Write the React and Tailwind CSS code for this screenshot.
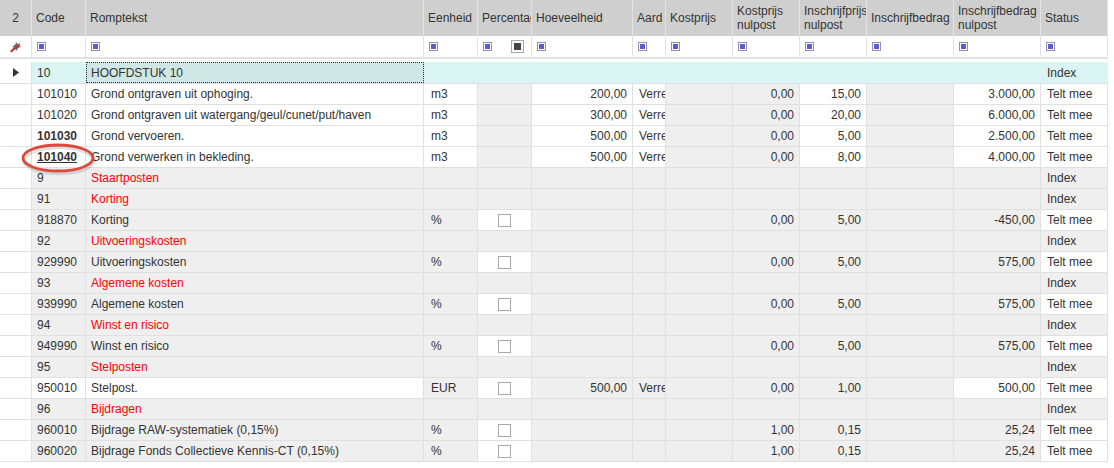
import React from 'react';

// column widths of the grid, left to right
const COLS = [
  { k: 'rh', w: 'w-[32px]' },
  { k: 'code', w: 'w-[54px]' },
  { k: 'text', w: 'w-[338px]' },
  { k: 'unit', w: 'w-[54px]' },
  { k: 'pct', w: 'w-[54px]' },
  { k: 'qty', w: 'w-[101px]' },
  { k: 'aard', w: 'w-[33px]' },
  { k: 'kp', w: 'w-[67px]' },
  { k: 'kpn', w: 'w-[67px]' },
  { k: 'ipn', w: 'w-[67px]' },
  { k: 'ib', w: 'w-[87px]' },
  { k: 'ibn', w: 'w-[87px]' },
  { k: 'status', w: 'w-[67px]' },
];

const HEADERS = {
  rh: '2',
  code: 'Code',
  text: 'Romptekst',
  unit: 'Eenheid',
  pct: 'Percentage',
  qty: 'Hoeveelheid',
  aard: 'Aard',
  kp: 'Kostprijs',
  kpn: ['Kostprijs', 'nulpost'],
  ipn: ['Inschrijfprijs', 'nulpost'],
  ib: 'Inschrijfbedrag',
  ibn: ['Inschrijfbedrag', 'nulpost'],
  status: 'Status',
};

const RIGHT = ['qty', 'kp', 'kpn', 'ipn', 'ib', 'ibn'];

// which cells are white, per row type (the rest is gray)
const WHITE = {
  item: ['rh', 'code', 'text', 'unit', 'qty', 'aard', 'ipn', 'ibn', 'status'],
  section: ['rh'],
  staart: ['rh', 'pct', 'status'],
  stelpost: ['rh', 'code', 'text', 'pct', 'ibn', 'status'],
};

const rows = [
  { type: 'item', code: '101010', text: 'Grond ontgraven uit ophoging.', unit: 'm3', qty: '200,00', aard: 'Verrekenbaar', kpn: '0,00', ipn: '15,00', ibn: '3.000,00', status: 'Telt mee' },
  { type: 'item', code: '101020', text: 'Grond ontgraven uit watergang/geul/cunet/put/haven', unit: 'm3', qty: '300,00', aard: 'Verrekenbaar', kpn: '0,00', ipn: '20,00', ibn: '6.000,00', status: 'Telt mee' },
  { type: 'item', code: '101030', bold: true, text: 'Grond vervoeren.', unit: 'm3', qty: '500,00', aard: 'Verrekenbaar', kpn: '0,00', ipn: '5,00', ibn: '2.500,00', status: 'Telt mee' },
  { type: 'item', code: '101040', bold: true, underline: true, text: 'Grond verwerken in bekleding.', unit: 'm3', qty: '500,00', aard: 'Verrekenbaar', kpn: '0,00', ipn: '8,00', ibn: '4.000,00', status: 'Telt mee' },
  { type: 'section', code: '9', text: 'Staartposten', status: 'Index' },
  { type: 'section', code: '91', text: 'Korting', status: 'Index' },
  { type: 'staart', code: '918870', text: 'Korting', unit: '%', check: true, kpn: '0,00', ipn: '5,00', ibn: '-450,00', status: 'Telt mee' },
  { type: 'section', code: '92', text: 'Uitvoeringskosten', status: 'Index' },
  { type: 'staart', code: '929990', text: 'Uitvoeringskosten', unit: '%', check: true, kpn: '0,00', ipn: '5,00', ibn: '575,00', status: 'Telt mee' },
  { type: 'section', code: '93', text: 'Algemene kosten', status: 'Index' },
  { type: 'staart', code: '939990', text: 'Algemene kosten', unit: '%', check: true, kpn: '0,00', ipn: '5,00', ibn: '575,00', status: 'Telt mee' },
  { type: 'section', code: '94', text: 'Winst en risico', status: 'Index' },
  { type: 'staart', code: '949990', text: 'Winst en risico', unit: '%', check: true, kpn: '0,00', ipn: '5,00', ibn: '575,00', status: 'Telt mee' },
  { type: 'section', code: '95', text: 'Stelposten', status: 'Index' },
  { type: 'stelpost', code: '950010', text: 'Stelpost.', unit: 'EUR', check: true, qty: '500,00', aard: 'Verrekenbaar', kpn: '0,00', ipn: '1,00', ibn: '500,00', status: 'Telt mee' },
  { type: 'section', code: '96', text: 'Bijdragen', status: 'Index' },
  { type: 'staart', code: '960010', text: 'Bijdrage RAW-systematiek (0,15%)', unit: '%', check: true, kpn: '1,00', ipn: '0,15', ibn: '25,24', status: 'Telt mee' },
  { type: 'staart', code: '960020', text: 'Bijdrage Fonds Collectieve Kennis-CT (0,15%)', unit: '%', check: true, kpn: '1,00', ipn: '0,15', ibn: '25,24', status: 'Telt mee' },
];

const FilterIcon = () => (
  <span className="inline-block w-[9px] h-[9px] border border-[#8f8fb8] bg-white p-[1px]">
    <span className="block w-full h-full bg-[#5c5cd2]" />
  </span>
);

const Checkbox = ({ filled }) => (
  <span className="inline-flex items-center justify-center w-[13px] h-[13px] border border-[#a8a8a8] bg-white">
    {filled && <span className="block w-[7px] h-[7px] bg-[#444]" />}
  </span>
);

const PinOff = () => (
  <svg width="13" height="12" viewBox="0 0 13 12">
    <path d="M7 1 L12 6 L10 6.5 L8 8.5 L8 10 L3 5 L4.5 5 L6.5 3 Z" fill="#707070" />
    <path d="M5 7 L1.5 10.5" stroke="#707070" strokeWidth="1.3" />
    <path d="M2 11 L11 3" stroke="#e31b1b" strokeWidth="1.3" />
  </svg>
);

const Arrow = () => (
  <svg width="6" height="9" viewBox="0 0 6 9">
    <path d="M0 0 L6 4.5 L0 9 Z" fill="#333" />
  </svg>
);

function HeaderRow() {
  return (
    <div className="flex h-[36px] bg-[#cfcfcf]">
      {COLS.map((c) => {
        const h = HEADERS[c.k];
        return (
          <div
            key={c.k}
            className={`${c.w} shrink-0 h-full flex items-center overflow-hidden whitespace-nowrap border-r border-[#e2e2e2] ${c.k === 'rh' ? 'justify-center' : 'pl-[4px]'}`}
          >
            {Array.isArray(h) ? (
              <div className="leading-[14px]">
                <div>{h[0]}</div>
                <div>{h[1]}</div>
              </div>
            ) : (
              <span>{h}</span>
            )}
          </div>
        );
      })}
    </div>
  );
}

function FilterRow() {
  return (
    <div className="flex h-[23px] bg-white border-b-2 border-[#e2e2e2]">
      {COLS.map((c) => (
        <div
          key={c.k}
          className={`${c.w} shrink-0 h-full flex items-center border-r border-[#e2e2e2] ${c.k === 'rh' ? 'justify-center' : 'pl-[5px]'}`}
        >
          {c.k === 'rh' ? (
            <PinOff />
          ) : c.k === 'pct' ? (
            <div className="flex items-center gap-[19px]">
              <FilterIcon />
              <Checkbox filled />
            </div>
          ) : (
            <FilterIcon />
          )}
        </div>
      ))}
    </div>
  );
}

function ChapterRow() {
  return (
    <div className="flex h-[22px] bg-[#daf3f3] border-b border-[#e0e0e0]">
      <div className="w-[32px] shrink-0 h-full flex items-center justify-center bg-white border-r border-[#e0e0e0]">
        <Arrow />
      </div>
      <div className="w-[54px] shrink-0 h-full flex items-center pl-[5px]">10</div>
      <div className="w-[338px] shrink-0 h-full flex items-center pl-[4px] bg-[#cfe8e6] border border-dotted border-[#1d3535]">
        HOOFDSTUK 10
      </div>
      <div className="w-[617px] shrink-0" />
      <div className="w-[67px] shrink-0 h-full flex items-center pl-[6px]">Index</div>
    </div>
  );
}

function DataRow({ r }) {
  const white = WHITE[r.type];
  return (
    <div className="flex h-[21px] border-b border-[#e0e0e0]">
      {COLS.map((c) => {
        const bg = white.includes(c.k) ? 'bg-white' : 'bg-[#efefef]';
        let content = null;
        let extra = '';
        if (c.k === 'code') {
          content = r.code;
          extra = `pl-[5px] ${r.bold ? 'font-bold' : ''} ${r.underline ? 'underline' : ''}`;
        } else if (c.k === 'text') {
          content = r.text;
          extra = `pl-[5px] ${r.type === 'section' ? 'text-[#ff0000]' : ''}`;
        } else if (c.k === 'pct') {
          content = r.check ? <Checkbox /> : null;
          extra = 'justify-center';
        } else if (c.k === 'unit') {
          content = r.unit;
          extra = 'pl-[7px]';
        } else if (c.k === 'status') {
          content = r.status;
          extra = 'pl-[6px]';
        } else if (RIGHT.includes(c.k)) {
          content = r[c.k];
          extra = 'justify-end pr-[5px]';
        } else if (c.k === 'aard') {
          content = r.aard;
          extra = 'pl-[6px]';
        }
        return (
          <div
            key={c.k}
            className={`${c.w} ${bg} shrink-0 h-full flex items-center overflow-hidden whitespace-nowrap border-r border-[#e0e0e0] ${extra}`}
          >
            {content}
          </div>
        );
      })}
    </div>
  );
}

export default function App() {
  return (
    <div className="relative w-[1114px] h-[468px] bg-white overflow-hidden text-[12px] text-[#333] font-['Liberation_Sans',Arial,sans-serif]">
      <div className="w-[1108px]">
        <HeaderRow />
        <FilterRow />
        <div className="h-[3px]" />
        <ChapterRow />
        {rows.map((r) => (
          <DataRow key={r.code} r={r} />
        ))}
      </div>

      {/* red annotation around 101040 */}
      <svg className="absolute left-[17px] top-[140px]" width="82" height="38" viewBox="0 0 82 38">
        <ellipse cx="41" cy="18.5" rx="35" ry="13" fill="none" stroke="#000" strokeOpacity="0.12" strokeWidth="4.5" transform="translate(1 1.5)" />
        <ellipse cx="41" cy="18" rx="35" ry="13" fill="none" stroke="#dc4a3c" strokeWidth="2.8" />
      </svg>
    </div>
  );
}
